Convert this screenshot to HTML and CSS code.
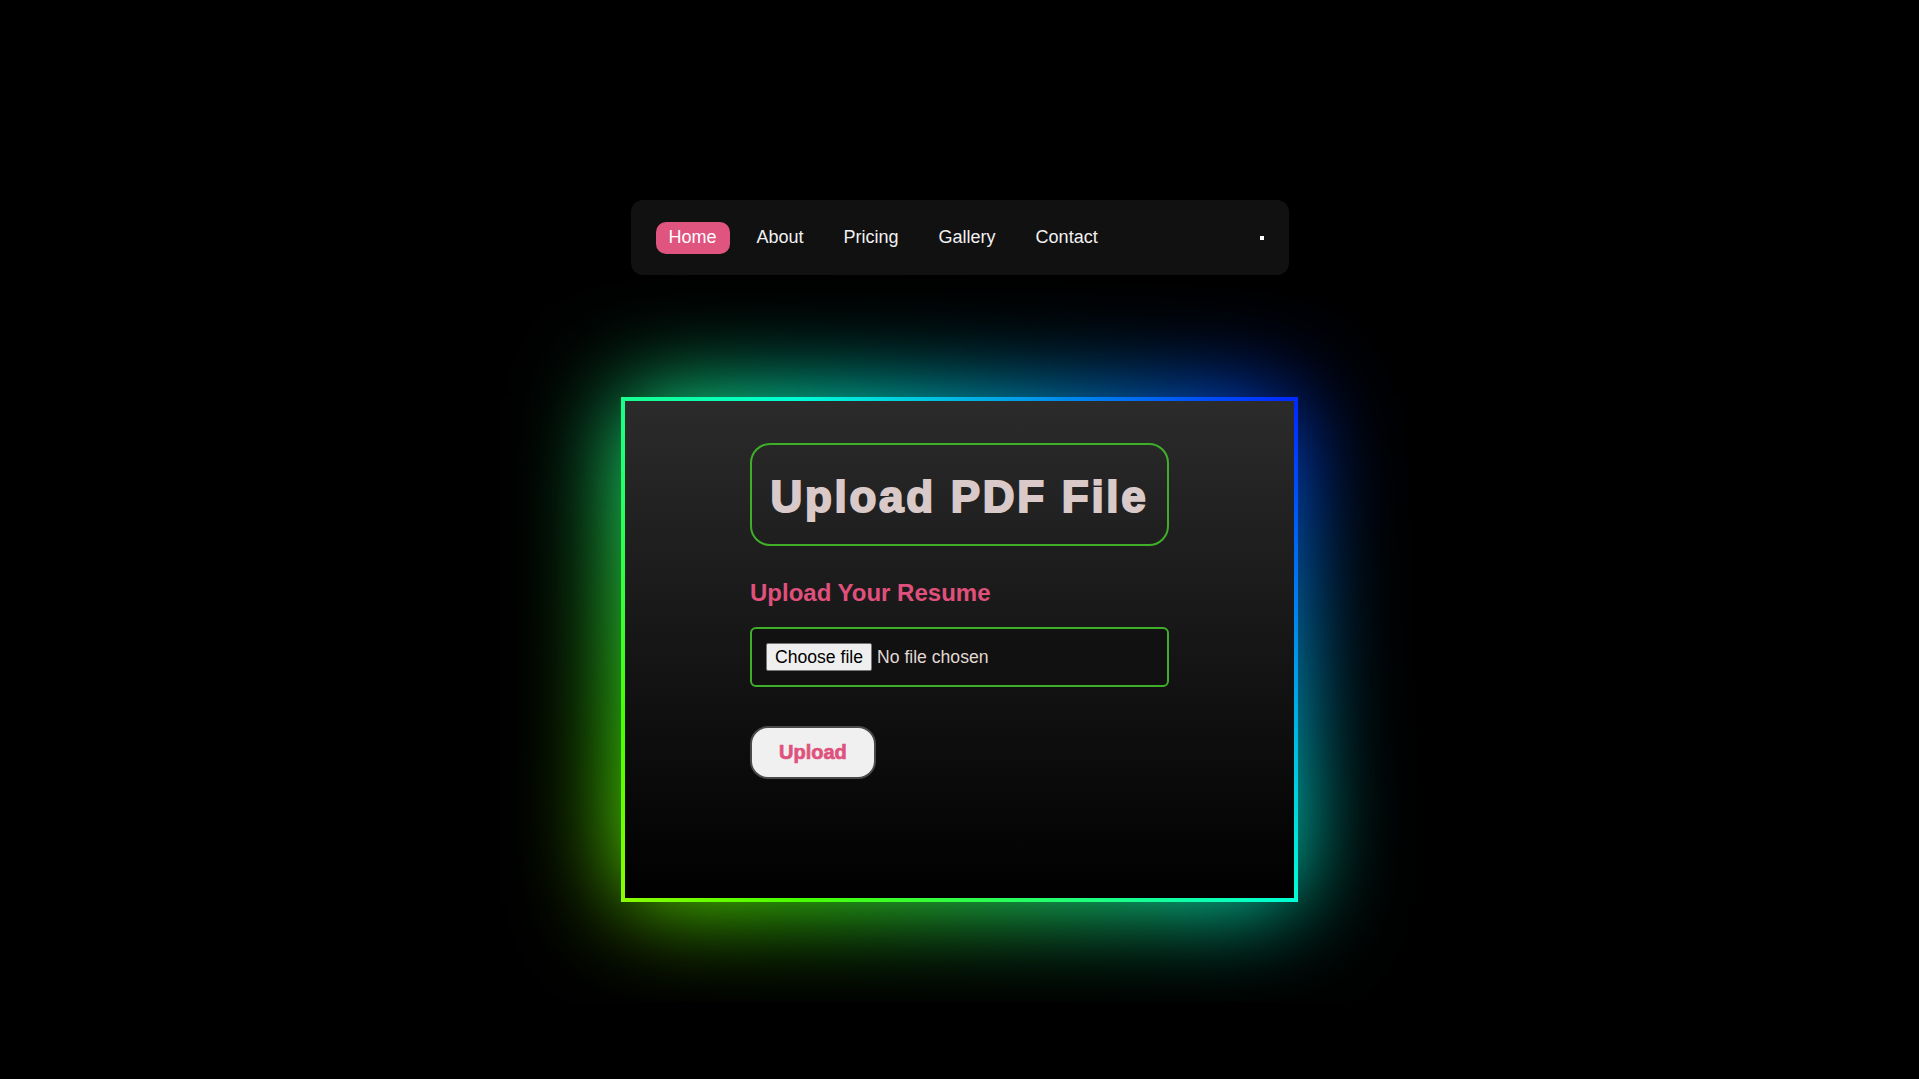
FILE: index.html
```html
<!DOCTYPE html>
<html lang="en">
<head>
<meta charset="UTF-8">
<title>Upload PDF File</title>
<link rel="stylesheet" href="styles.css">
</head>
<body>
<div class="page">
  <nav class="navbar">
    <a class="nav-link active" href="#">Home</a>
    <a class="nav-link" href="#">About</a>
    <a class="nav-link" href="#">Pricing</a>
    <a class="nav-link" href="#">Gallery</a>
    <a class="nav-link" href="#">Contact</a>
    <span class="nav-dot"></span>
  </nav>

  <div class="card">
    <div class="card-inner">
      <form class="upload-form">
        <h1 class="title">Upload PDF File</h1>
        <h2 class="subtitle">Upload Your Resume</h2>
        <div class="file-box">
          <label class="file-btn">Choose file<input class="file-input" type="file" accept="application/pdf"></label>
          <span class="file-name">No file chosen</span>
        </div>
        <button class="upload-btn" type="button">Upload</button>
      </form>
    </div>
  </div>
</div>
</body>
</html>
```

FILE: styles.css
```css
html {
  background: #000;
}

body {
  margin: 0;
  padding: 0;
  font-family: "Liberation Sans", Arial, sans-serif;
  color: #eee;
}

.page {
  padding-top: 200px;
  padding-bottom: 100px;
}

.navbar {
  width: 658px;
  height: 75px;
  box-sizing: border-box;
  margin: 0 auto;
  padding: 0 25px;
  background: #111;
  border-radius: 12px;
  display: flex;
  align-items: center;
  gap: 14px;
}

.nav-link {
  font-size: 18px;
  line-height: 20px;
  padding: 5px 13px 7px;
  color: #f2f2f2;
  text-decoration: none;
  border-radius: 10px;
}

.nav-link.active {
  background: #df5580;
  color: #fff;
}

.nav-dot {
  margin-left: auto;
  width: 4px;
  height: 4px;
  background: #fff;
}

.card {
  position: relative;
  width: 677px;
  height: 505px;
  box-sizing: border-box;
  margin: 122px auto 0;
  padding: 4px;
  background: linear-gradient(45deg, #fffb00 -27%, #48ff00 15%, #00ffd5 57%, #002bff 99%);
}

.card::after {
  content: "";
  position: absolute;
  inset: 0;
  background: linear-gradient(45deg, #fffb00 -27%, #48ff00 15%, #00ffd5 57%, #002bff 99%);
  filter: blur(50px);
  z-index: -1;
}

.card-inner {
  height: 100%;
  background: linear-gradient(to bottom, #2b2b2b, #000);
  padding-top: 42px;
  box-sizing: border-box;
}

.upload-form {
  width: 419px;
  margin: 0 auto;
  display: flex;
  flex-direction: column;
  align-items: flex-start;
}

.title {
  align-self: stretch;
  margin: 0;
  padding: 26px 0 21px;
  border: 2px solid #3fae29;
  border-radius: 20px;
  font-size: 44px;
  line-height: 52px;
  font-weight: bold;
  letter-spacing: 2.7px;
  -webkit-text-stroke: 2px #d9c9c9;
  text-align: center;
  color: #d9c9c9;
}

.subtitle {
  margin: 33px 0 0;
  font-size: 24px;
  line-height: 28px;
  font-weight: bold;
  color: #e0507c;
}

.file-box {
  align-self: stretch;
  margin-top: 20px;
  padding: 14px;
  border: 2px solid #3fae29;
  border-radius: 6px;
  background: #111;
  display: flex;
  align-items: center;
  gap: 5px;
  font-size: 17.6px;
  line-height: 22px;
}

.file-btn {
  display: block;
  padding: 1px 8px;
  height: 24px;
  line-height: 24px;
  border: 1px solid #767676;
  border-radius: 2px;
  background: #efefef;
  color: #000;
  cursor: pointer;
}

.file-input {
  display: none;
}

.file-name {
  color: #e2d8d2;
}

.upload-btn {
  margin-top: 39px;
  padding: 13px 27px;
  border: 2px solid #4a4a4a;
  border-radius: 18px;
  background: #f0f0f0;
  color: #e0527e;
  font-family: "Liberation Sans", Arial, sans-serif;
  font-size: 20px;
  line-height: 23px;
  font-weight: bold;
  -webkit-text-stroke: 0.7px #e0527e;
  cursor: pointer;
}
```
